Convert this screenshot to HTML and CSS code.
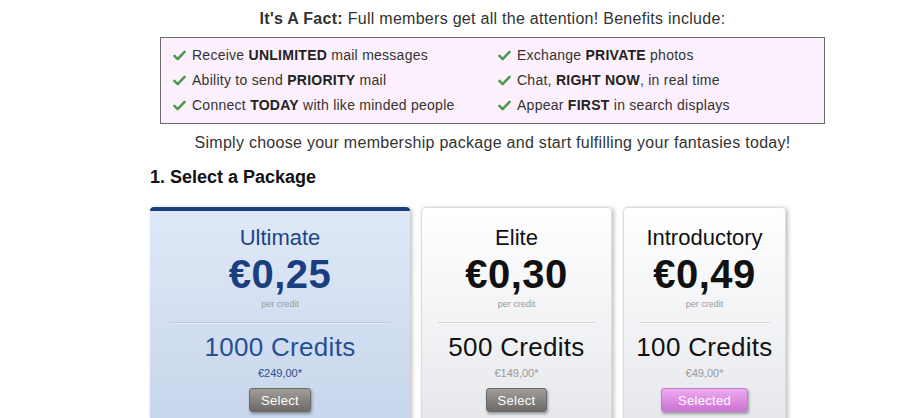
FILE: index.html
```html
<!DOCTYPE html>
<html lang="en">
<head>
  <meta charset="UTF-8">
  <title>Membership Packages</title>
  <link rel="stylesheet" href="styles.css">
</head>
<body>
  <div class="page">
    <p class="fact"><strong>It's A Fact:</strong> Full members get all the attention! Benefits include:</p>

    <ul class="benefits">
      <li><svg class="check" viewBox="0 0 14 12"><path d="M1.5 6.5 L5 10 L12.5 2" /></svg>Receive <b>UNLIMITED</b> mail messages</li>
      <li><svg class="check" viewBox="0 0 14 12"><path d="M1.5 6.5 L5 10 L12.5 2" /></svg>Exchange <b>PRIVATE</b> photos</li>
      <li><svg class="check" viewBox="0 0 14 12"><path d="M1.5 6.5 L5 10 L12.5 2" /></svg>Ability to send <b>PRIORITY</b> mail</li>
      <li><svg class="check" viewBox="0 0 14 12"><path d="M1.5 6.5 L5 10 L12.5 2" /></svg>Chat, <b>RIGHT NOW</b>, in real time</li>
      <li><svg class="check" viewBox="0 0 14 12"><path d="M1.5 6.5 L5 10 L12.5 2" /></svg>Connect <b>TODAY</b> with like minded people</li>
      <li><svg class="check" viewBox="0 0 14 12"><path d="M1.5 6.5 L5 10 L12.5 2" /></svg>Appear <b>FIRST</b> in search displays</li>
    </ul>

    <p class="intro">Simply choose your membership package and start fulfilling your fantasies today!</p>

    <h2 class="step">1. Select a Package</h2>

    <div class="packages">
      <div class="package package-ultimate">
        <div class="pkg-name">Ultimate</div>
        <div class="pkg-price">€0,25</div>
        <div class="pkg-per">per credit</div>
        <hr class="pkg-divider">
        <div class="pkg-credits">1000 Credits</div>
        <div class="pkg-total">€249,00*</div>
        <button class="pkg-btn">Select</button>
      </div>
      <div class="package package-elite">
        <div class="pkg-name">Elite</div>
        <div class="pkg-price">€0,30</div>
        <div class="pkg-per">per credit</div>
        <hr class="pkg-divider">
        <div class="pkg-credits">500 Credits</div>
        <div class="pkg-total">€149,00*</div>
        <button class="pkg-btn">Select</button>
      </div>
      <div class="package package-intro">
        <div class="pkg-name">Introductory</div>
        <div class="pkg-price">€0,49</div>
        <div class="pkg-per">per credit</div>
        <hr class="pkg-divider">
        <div class="pkg-credits">100 Credits</div>
        <div class="pkg-total">€49,00*</div>
        <button class="pkg-btn pkg-btn-selected">Selected</button>
      </div>
    </div>
  </div>
</body>
</html>
```

FILE: styles.css
```css
/* Global Styles */
body {
  margin: 0;
  background: #fff;
  font-family: "Liberation Sans", Arial, sans-serif;
  color: #333;
  overflow: hidden;
}

.page {
  width: 685px;
  margin-left: 150px;
  padding-top: 9px;
}

.fact {
  margin: 0 0 8px;
  font-size: 16px;
  line-height: 20px;
  letter-spacing: 0.28px;
  text-align: center;
}

/* Benefits box */
.benefits {
  list-style: none;
  margin: 0 10px;
  padding: 5px 0 5px 12px;
  border: 1px solid #6a6a6a;
  background: #fcf0fc;
  display: grid;
  grid-template-columns: 325px 1fr;
}

.benefits li {
  height: 25px;
  line-height: 25px;
  font-size: 14px;
  letter-spacing: 0.26px;
  color: #333;
  white-space: nowrap;
}

.benefits b {
  color: #222;
}

.check {
  width: 13px;
  height: 11px;
  margin-right: 6px;
  vertical-align: -1px;
  fill: none;
  stroke: #4d9a4f;
  stroke-width: 2.8;
  stroke-linecap: round;
  stroke-linejoin: round;
}

.intro {
  margin: 9px 0 0;
  font-size: 16px;
  line-height: 20px;
  letter-spacing: 0.28px;
  text-align: center;
}

.step {
  margin: 13px 0 19px;
  font-size: 18px;
  line-height: 22px;
  color: #111;
}

/* Packages */
.packages {
  display: flex;
  gap: 11px;
  align-items: flex-start;
}

.package {
  box-sizing: border-box;
  height: 240px;
  padding: 17px 16px 0;
  border: 1px solid #dcdcdc;
  border-radius: 4px;
  background: linear-gradient(#ffffff, #e6e8ec 90%);
  box-shadow: 2px 1px 4px rgba(0, 0, 0, 0.25);
  text-align: center;
  color: #111;
  white-space: nowrap;
}

.package-ultimate {
  width: 260px;
  padding: 14px 20px 0;
  border: none;
  border-top: 4px solid #1b3f7c;
  background: linear-gradient(#dfe8f6, #c7d6ec 90%);
  color: #1d4585;
}

.package-elite {
  width: 191px;
}

.package-intro {
  width: 163px;
  padding-left: 12px;
  padding-right: 12px;
}

.pkg-name {
  font-size: 22px;
  line-height: 26px;
}

.pkg-price {
  margin-top: 1px;
  font-size: 40px;
  line-height: 44px;
  font-weight: bold;
  letter-spacing: 0.5px;
}

.package-ultimate .pkg-price {
  color: #1a3f80;
}

.pkg-per {
  margin-top: 2px;
  font-size: 9px;
  line-height: 12px;
  color: #999;
}

.pkg-divider {
  margin: 12px 0 0;
  border: none;
  border-top: 1px solid #d6d6d6;
  border-bottom: 1px solid #f8f8f8;
}

.package-intro .pkg-divider {
  margin-left: 3px;
  margin-right: 3px;
}

.package-ultimate .pkg-divider {
  border-top-color: #bccbe0;
  border-bottom-color: #e6edf8;
}

.pkg-credits {
  margin-top: 8px;
  font-size: 26px;
  line-height: 30px;
  letter-spacing: 0.3px;
}

.package-ultimate .pkg-credits {
  color: #25508f;
}

.pkg-total {
  margin-top: 4px;
  font-size: 11px;
  line-height: 14px;
  color: #999;
}

.package-ultimate .pkg-total {
  color: #2a4f86;
}

.pkg-btn {
  margin-top: 8px;
  height: 24px;
  padding: 0 11px;
  border: 1px solid #6a6a6a;
  border-radius: 3px;
  background: linear-gradient(#a09d9a, #6c6966);
  color: #fff;
  font-family: "Liberation Sans", Arial, sans-serif;
  font-size: 13px;
  letter-spacing: 0.3px;
  box-shadow: 1px 2px 3px rgba(0, 0, 0, 0.35);
  cursor: pointer;
}

.pkg-btn-selected {
  padding: 0 16px;
  border-color: #c27ccc;
  background: linear-gradient(#eeaaf0, #cc72d4);
}
```
